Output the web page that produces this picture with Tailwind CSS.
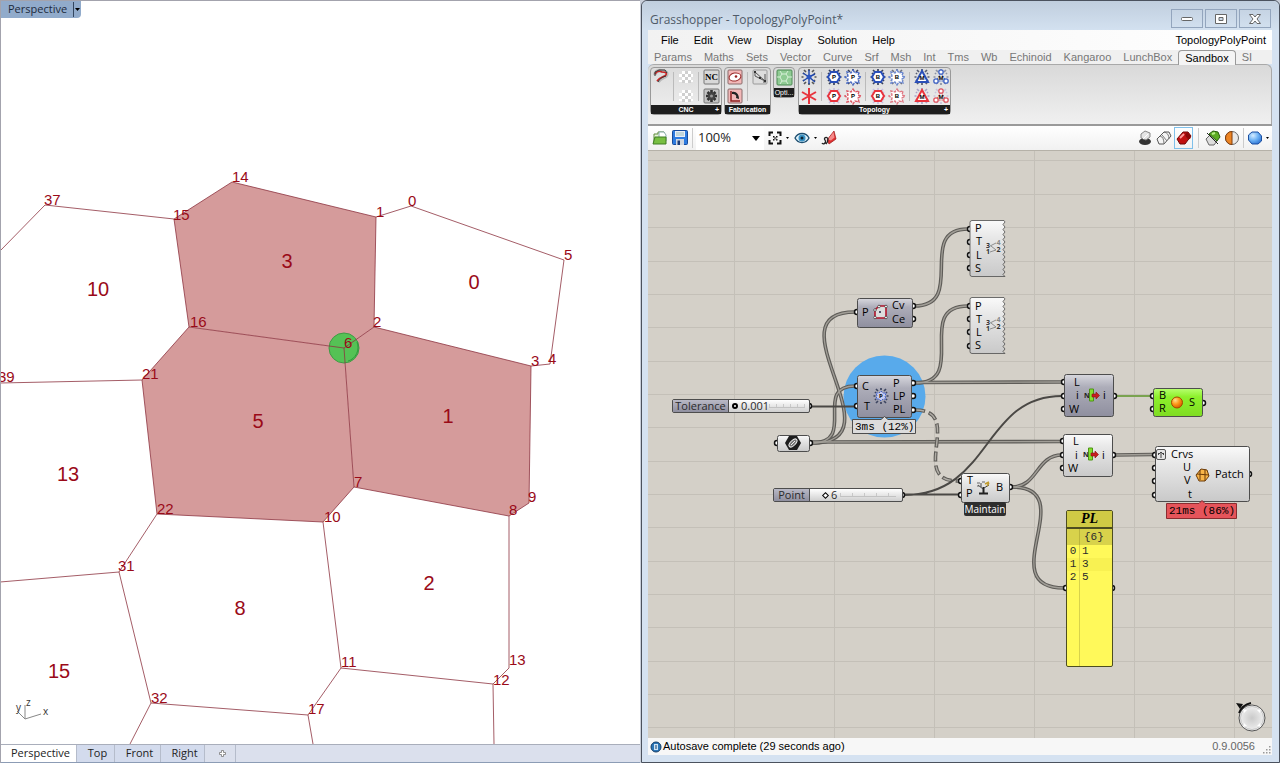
<!DOCTYPE html>
<html lang="en">
<head>
<meta charset="utf-8">
<title>Grasshopper - TopologyPolyPoint</title>
<script src="https://cdn.jsdelivr.net/npm/@tailwindcss/browser@4"></script>
</head>
<body class="flex h-screen overflow-hidden bg-[#c9cfda] font-['Liberation_Sans',sans-serif] text-black">

<!-- Shared symbols -->
<svg class="absolute size-0" aria-hidden="true">
  <defs>
    <linearGradient id="light" x1="0" y1="0" x2="0" y2="1"><stop offset="0" stop-color="#fafafa"/><stop offset=".3" stop-color="#e8e8e8"/><stop offset="1" stop-color="#c9c9c9"/></linearGradient>
    <linearGradient id="dim" x1="0" y1="0" x2="0" y2="1"><stop offset="0" stop-color="#d8d8de"/><stop offset=".3" stop-color="#adadb9"/><stop offset="1" stop-color="#8f8f9f"/></linearGradient>
    <linearGradient id="picked" x1="0" y1="0" x2="0" y2="1"><stop offset="0" stop-color="#b8ff70"/><stop offset=".3" stop-color="#8df02c"/><stop offset="1" stop-color="#7fdc22"/></linearGradient>
    <radialGradient id="orb" cx=".35" cy=".3" r=".7"><stop offset="0" stop-color="#ffe08a"/><stop offset=".5" stop-color="#ff9a1c"/><stop offset="1" stop-color="#d95f00"/></radialGradient>
    <radialGradient id="blueorb" cx=".35" cy=".3" r=".8"><stop offset="0" stop-color="#d5ecff"/><stop offset=".5" stop-color="#6db2f5"/><stop offset="1" stop-color="#2a6fd0"/></radialGradient>
    <radialGradient id="dial"><stop offset="0" stop-color="#cacaca"/><stop offset="1" stop-color="#ececec"/></radialGradient>
    <symbol id="specks" viewBox="0 0 18 18"><path d="M4 2l2 2M9 1v2M14 2l-2 2M1.500 9h2M14.500 9h2M3 5l1 1M15 5l-1 1M3 13l1-1M15 13l-1-1M4 16l2-2M9 15v2M14 16l-2-2" stroke="currentColor" stroke-width="1.700" fill="none"/></symbol>
    <symbol id="hex" viewBox="0 0 18 18"><path d="M6 4h6l3 5-3 5H6L3 9z" fill="#fff" stroke="currentColor" stroke-width="2"/></symbol>
    <symbol id="flower" viewBox="0 0 18 18"><path d="M9 2l2 3 4-1-1 4 3 1-3 2 1 4-4-1-2 3-2-3-4 1 1-4-3-2 3-1-1-4 4 1z" fill="#fff" stroke="currentColor" stroke-width="1.400" stroke-dasharray="3 1"/></symbol>
    <symbol id="tri" viewBox="0 0 18 18"><path d="M9 3l6 11H3z" fill="#fff" stroke="currentColor" stroke-width="2"/></symbol>
    <symbol id="tri3" viewBox="0 0 18 18"><path d="M9 5L4 13h10z" fill="none" stroke="currentColor" stroke-dasharray="2 1"/><g fill="#fff" stroke="currentColor" stroke-width="1.300"><circle cx="9" cy="4" r="2.200"/><circle cx="4" cy="13" r="2.200"/><circle cx="14" cy="13" r="2.200"/></g></symbol>
    <symbol id="checker" viewBox="0 0 18 18"><g fill="#fff"><path d="M5 3h3v3H5zM11 3h3v3h-3zM2 6h3v3H2zM8 6h3v3H8zM14 6h2v3h-2zM5 9h3v3H5zM11 9h3v3h-3zM2 12h3v2H2zM8 12h3v3H8zM14 12h2v2h-2z"/></g><g fill="#cfcfcf"><path d="M8 3h3v3H8zM5 6h3v3H5zM11 6h3v3h-3zM8 9h3v3H8zM5 12h3v3H5zM11 12h3v3h-3z"/></g></symbol>
    <symbol id="item" viewBox="0 0 16 14"><text x="0" y="10" font-size="7" font-weight="bold" fill="#222">N</text><path d="M5.500 1h4v12h-4z" fill="#84e02e" stroke="#4d9415"/><path d="M8 6h4V4l3.500 3.500-3.500 3.500V9H8z" fill="#c81e1e" stroke="#8a1010" stroke-width=".6"/></symbol>
    <symbol id="split" viewBox="0 0 16 16"><g font-size="7" fill="#333" font-weight="bold"><text x="0" y="8">3</text><text x="10.500" y="5" fill="#888">4</text><text x="0" y="14">1</text><text x="10.500" y="12">2</text></g><path d="M4 6l6-3M5 6l5 4M4 12l6-2" stroke="#777" stroke-width=".8"/></symbol>
  </defs>
</svg>

<!-- Rhino viewport -->
<section class="flex w-1/2 shrink-0 flex-col border-t border-l border-[#a3a3ad] bg-white font-['Open_Sans',sans-serif]" aria-label="Rhino viewport">
  <div class="relative min-h-0 flex-1 overflow-hidden">
    <svg class="size-full" aria-label="Cell topology">
      <g transform="translate(-1 -1)">
        <g fill="#d59b9b">
          <path d="M174 219L232 182 376 217 374 327 344 348 189 327z"/>
          <path d="M189 327L344 348 354 487 323 522 157 514 142 380z"/>
          <path d="M374 327L531 366 529 503 509 516 354 487 344 348z"/>
        </g>
        <circle cx="344" cy="348" r="15" fill="#55c255" stroke="#3f9a45"/>
        <path d="M357 342a13 14 0 0 1-9 19" fill="none" stroke="#2f9a3c"/>
        <path d="M0 251L45 205 174 219 232 182 376 217 411 206 564 260 550 364 531 366 374 327 376 217M174 219L189 327 344 348 374 327M189 327L142 380 0 383M142 380L157 514 323 522 354 487 344 348M354 487L509 516 529 503 531 366M157 514L119 572 0 582M119 572L151 703 308 715 341 668 323 522M151 703L130 744M308 715L313 744M341 668L493 684 509 668V516M493 684L494 744" fill="none" stroke="#8d3340" stroke-width=".8"/>
        <g fill="#9a0a18" class="font-['Liberation_Sans',sans-serif] text-[15px]">
          <text x="44" y="205">37</text><text x="232" y="182">14</text><text x="173" y="220">15</text><text x="376" y="217">1</text><text x="408" y="206">0</text><text x="564" y="260">5</text><text x="373" y="327">2</text><text x="190" y="327">16</text><text x="344" y="348">6</text><text x="531" y="366">3</text><text x="548" y="364">4</text><text x="142" y="379">21</text><text x="-2" y="382">39</text><text x="354" y="487">7</text><text x="528" y="502">9</text><text x="509" y="515">8</text><text x="157" y="514">22</text><text x="324" y="522">10</text><text x="118" y="571">31</text><text x="341" y="667">11</text><text x="509" y="665">13</text><text x="493" y="685">12</text><text x="151" y="703">32</text><text x="308" y="714">17</text>
        </g>
        <g fill="#9a0a18" class="font-['Liberation_Sans',sans-serif] text-[20px]" text-anchor="middle">
          <text x="98" y="296">10</text><text x="287" y="268">3</text><text x="474" y="289">0</text><text x="258" y="428">5</text><text x="448" y="423">1</text><text x="68" y="481">13</text><text x="429" y="590">2</text><text x="240" y="615">8</text><text x="59" y="678">15</text>
        </g>
        <path d="M17 711l8 8V705M25 719l16-5" fill="none" stroke="#888"/>
        <g fill="#333" class="text-[10px]"><text x="26" y="706">z</text><text x="16" y="711">y</text><text x="43" y="715">x</text></g>
      </g>
    </svg>
    <button class="absolute top-0 left-0 flex h-[17px] items-center rounded-br-sm bg-[#91abcb] pr-px pl-[7px] text-[11px] text-[#1c2a3c]">Perspective<span class="ml-1.5 h-[15px] w-px bg-[#33465f]"></span><svg class="ml-px h-1 w-[5px]" viewBox="0 0 5 4"><path d="M0 0h5L2.500 3z"/></svg></button>
  </div>
  <nav class="flex h-[19px] border-t border-b border-t-[#a9aebb] border-b-[#8c9cb5] bg-[#dbe0ed] text-[11px] text-[#222]" aria-label="Viewports">
    <button class="w-[76px] border-r border-[#b5bccb] bg-white pl-1">Perspective</button>
    <button class="w-[38px] border-r border-[#b5bccb] bg-[#d3dbed] pl-1">Top</button>
    <button class="w-[46px] border-r border-[#b5bccb] bg-[#d3dbed] pl-1">Front</button>
    <button class="w-11 border-r border-[#b5bccb] bg-[#d3dbed] pl-1">Right</button>
    <button class="flex w-[31px] items-center justify-center border-r border-[#b5bccb] pl-1" aria-label="Add viewport"><svg class="size-[7px]" viewBox="0 0 7 7"><path d="M2.500.5h2v2h2v2h-2v2h-2v-2h-2v-2h2z" fill="#fff" stroke="#777" stroke-width=".8"/></svg></button>
  </nav>
</section>

<!-- Grasshopper window -->
<main class="ml-px flex min-w-0 flex-1 flex-col rounded-t-md border border-[#4b525e] bg-[#d5e2f1] pr-[7px] pb-[7px] pl-1.5">
  <header class="-mr-[7px] -ml-1.5 flex h-[29px] shrink-0 justify-between rounded-t-md bg-linear-to-b from-[#c0cede] to-[#d3e1f0] pr-2 pl-2">
    <h1 class="pt-[11px] font-['Open_Sans',sans-serif] text-[12px] leading-4 text-[#4f5a68]">Grasshopper - TopologyPolyPoint*</h1>
    <div class="flex gap-0.5 pt-2">
      <button class="flex h-[19px] w-8 items-center justify-center border border-[#93a5bd]" aria-label="Minimize"><svg class="h-1 w-3" viewBox="0 0 12 4"><rect x=".5" y=".5" width="11" height="3" rx="1" fill="#fff" stroke="#666"/></svg></button>
      <button class="flex h-[19px] w-8 items-center justify-center border border-[#93a5bd]" aria-label="Maximize"><svg class="h-2.5 w-3" viewBox="0 0 12 10"><path d="M.5.500h11v9H.500zM4 3.500h4v3H4z" fill="#fff" fill-rule="evenodd" stroke="#666"/></svg></button>
      <button class="flex h-[19px] w-8 items-center justify-center border border-[#93a5bd]" aria-label="Close"><svg class="h-2.5 w-3" viewBox="0 0 12 10"><path d="M.5.500h3.500L6 3 8 .500h3.500L8 5l3.500 4.500H8L6 7 4 9.500H.500L4 5z" fill="#fff" stroke="#666"/></svg></button>
    </div>
  </header>

  <nav class="flex h-5 shrink-0 items-center bg-linear-to-r from-[#f2f2f2] to-white pr-1.5 pl-[13px] text-[11px]" aria-label="Menu">
    <div class="flex flex-1 gap-[15px]"><button>File</button><button>Edit</button><button>View</button><button>Display</button><button>Solution</button><button>Help</button></div>
    <button>TopologyPolyPoint</button>
  </nav>

  <nav class="flex h-3.5 shrink-0 bg-[#f0f0f0] text-[11px] leading-[15px] text-[#777]" aria-label="Component tabs">
    <button class="px-1.5">Params</button><button class="px-1.5">Maths</button><button class="px-1.5">Sets</button><button class="px-1.5">Vector</button><button class="px-1.5">Curve</button><button class="px-1.5">Srf</button><button class="px-1.5">Msh</button><button class="px-1.5">Int</button><button class="px-1.5">Tms</button><button class="px-1.5">Wb</button><button class="px-1.5">Echinoid</button><button class="px-1.5">Kangaroo</button><button class="px-1.5">LunchBox</button><button class="z-10 h-[15px] rounded-t-[4px] border border-b-0 border-[#999] bg-[#f4f4f4] px-1.5 leading-[13px] text-black">Sandbox</button><button class="px-1.5">SI</button>
  </nav>

  <!-- Ribbon -->
  <div class="flex h-[60px] shrink-0 items-start gap-0.5 rounded-t-md border-t border-r border-[#a9a9a9] bg-linear-to-b from-[#d9d9d9] to-[#f0f0f0] pt-0.5 pl-0.5">
    <section class="rounded-sm border border-[#999] bg-linear-to-b from-[#dcdcdc] to-[#efefef]">
      <div class="flex h-[37px] gap-[3px] px-px">
        <button class="size-[18px]" aria-label="Toolpath"><svg viewBox="0 0 18 18"><path d="M3 7c0-4 4-5 7-4 4 0 6 2 4 5-2 2-6 2-8 6" fill="none" stroke="#b8b8b8" stroke-width="3.500"/><path d="M3 6c2-3 5-3 7-2 4 0 5 1 4 3-2 2-6 2-9 6" fill="none" stroke="#c22" stroke-width="1.600"/><path d="M3 8V4l4-2h6l2 3M14 8c-3 1-6 2-8 6" fill="none" stroke="#333"/></svg></button>
        <span class="my-1 w-px bg-[#bbb]"></span>
        <div class="flex flex-col gap-px"><button class="size-[18px]" aria-label="Component"><svg viewBox="0 0 18 18"><use href="#checker"/></svg></button><button class="size-[18px]" aria-label="Component"><svg viewBox="0 0 18 18"><use href="#checker"/></svg></button></div>
        <span class="my-1 w-px bg-[#bbb]"></span>
        <div class="flex flex-col gap-px"><button class="size-[18px]" aria-label="NC"><svg viewBox="0 0 18 18"><rect x="2" y="2" width="15" height="14" rx="1" fill="#d8d8d8" stroke="#777"/><text x="9.500" y="12" font-family="Liberation Serif" font-size="9" font-weight="bold" text-anchor="middle">NC</text></svg></button><button class="size-[18px]" aria-label="Machine"><svg viewBox="0 0 18 18"><rect x="2" y="2" width="15" height="14" rx="1" fill="#c4c4c4" stroke="#777"/><path d="M9.500 3v12M4 9h11M5.500 5l8 8M13.500 5l-8 8" stroke="#333" stroke-width="2.600"/><circle cx="9.500" cy="9" r="3.500" fill="#444"/><circle cx="9.500" cy="9" r="1.500" fill="#999"/></svg></button></div>
      </div>
      <h2 class="relative h-[9px] bg-[#1e1e1e] text-center text-[7px] leading-[9px] font-bold text-white">CNC<span class="absolute right-0.5">+</span></h2>
    </section>
    <section class="rounded-sm border border-[#999] bg-linear-to-b from-[#dcdcdc] to-[#efefef]">
      <div class="flex h-[37px] gap-[3px] px-px">
        <div class="flex flex-col gap-px"><button class="size-[18px]" aria-label="Flatten"><svg viewBox="0 0 18 18"><rect x="2" y="2" width="14" height="14" rx="1" fill="#f3b9b9" stroke="#8a6a6a"/><ellipse cx="9" cy="9" rx="6" ry="4" transform="rotate(-12 9 9)" fill="#fff" stroke="#9a2a2a"/><circle cx="10" cy="8.500" r="1.300" fill="#922"/></svg></button><button class="size-[18px]" aria-label="Orient"><svg viewBox="0 0 18 18"><rect x="2" y="2" width="14" height="14" rx="1" fill="#f3b9b9" stroke="#8a6a6a"/><path d="M5 4v10h9" fill="none" stroke="#8d2020" stroke-width="1.500"/><path d="M6 5c4-1 7 2 7 7l-3-1c1-3-1-4-4-4z" fill="#222"/></svg></button></div>
        <span class="my-1 w-px bg-[#bbb]"></span>
        <button class="size-[18px]" aria-label="Dimension"><svg viewBox="0 0 18 18"><rect x="2" y="2" width="14" height="14" rx="1" fill="#ddd" stroke="#999"/><path d="M4 3v5l10 5V6M4 4l10 9M12 14h3" fill="none" stroke="#444" stroke-width=".9"/><path d="M3 3h2v2H3zM8 9h2v2H8zM13 12h2v2h-2z" fill="#333"/></svg></button>
      </div>
      <h2 class="h-[9px] bg-[#1e1e1e] text-center text-[7px] leading-[9px] font-bold text-white">Fabrication</h2>
    </section>
    <section class="mr-px rounded-sm border border-[#999] bg-[#dcdcdc]">
      <button class="block size-5" aria-label="Optimize"><svg viewBox="0 0 20 20"><rect x="3" y="2" width="15" height="15" rx="1" fill="#8fcb93" stroke="#4c8a55"/><path d="M6 3l2 3-2 3 2 4-2 3M8 6h4l2 3-2 4H8M12 6l2-3M14 9h4M12 13l2 3M3 9h3" fill="none" stroke="#d7f0d8"/></svg></button>
      <h2 class="h-[9px] bg-[#1e1e1e] text-center text-[7px] leading-[9px] text-white">Opti...</h2>
    </section>
    <section class="rounded-sm border border-[#999] bg-linear-to-b from-[#dcdcdc] to-[#efefef]">
      <div class="flex h-[37px] gap-[3px] pl-px">
        <div class="flex flex-col gap-px"><button class="size-[18px]" aria-label="Line topology"><svg viewBox="0 0 18 18"><g color="#555"><use href="#specks"/></g><path d="M9 9L9 2M9 9l6-3M9 9l6 5M9 9v7M9 9l-6 4M9 9L3 5" stroke="#1f45a8" stroke-width="1.400"/><circle cx="9" cy="9" r="2.500" fill="#2b55c0"/></svg></button><button class="size-[18px]" aria-label="Line split"><svg viewBox="0 0 18 18"><path d="M9 1v16M2 5l14 8M2 13l14-8" stroke="#e8343d" stroke-width="2"/></svg></button></div>
        <span class="my-1 w-px bg-[#bbb]"></span>
        <div class="grid grid-cols-2 gap-px">
          <button class="size-[18px]" aria-label="Polyline topology"><svg viewBox="0 0 18 18"><g color="#39415c"><use href="#specks"/></g><g color="#2a4fb8"><use href="#hex"/></g><text x="9" y="11" font-size="6" font-weight="bold" text-anchor="middle">P</text></svg></button>
          <button class="size-[18px]" aria-label="Polyline point topology"><svg viewBox="0 0 18 18"><g color="#39415c"><use href="#specks"/></g><g color="#4b6cc4"><use href="#flower"/></g><text x="9" y="11" font-size="6" font-weight="bold" text-anchor="middle">P</text></svg></button>
          <button class="size-[18px]" aria-label="Polyline edge"><svg viewBox="0 0 18 18"><g color="#c9bfe0"><use href="#specks"/></g><g color="#e8343d"><use href="#hex"/></g><text x="9" y="11" font-size="6" font-weight="bold" text-anchor="middle">P</text></svg></button>
          <button class="size-[18px]" aria-label="Polyline face"><svg viewBox="0 0 18 18"><g color="#dd5a66"><use href="#flower"/></g><text x="9" y="11" font-size="6" font-weight="bold" text-anchor="middle">P</text></svg></button>
        </div>
        <span class="my-1 w-px bg-[#bbb]"></span>
        <div class="grid grid-cols-2 gap-px">
          <button class="size-[18px]" aria-label="Brep topology"><svg viewBox="0 0 18 18"><g color="#39415c"><use href="#specks"/></g><g color="#2a4fb8"><use href="#hex"/></g><text x="9" y="11" font-size="6" font-weight="bold" text-anchor="middle">B</text></svg></button>
          <button class="size-[18px]" aria-label="Brep point topology"><svg viewBox="0 0 18 18"><g color="#6a7080"><use href="#specks"/></g><g color="#6b88d0"><use href="#flower"/></g><text x="9" y="11" font-size="6" font-weight="bold" text-anchor="middle">B</text></svg></button>
          <button class="size-[18px]" aria-label="Brep edge"><svg viewBox="0 0 18 18"><g color="#c9bfe0"><use href="#specks"/></g><g color="#e8343d"><use href="#hex"/></g><text x="9" y="11" font-size="6" font-weight="bold" text-anchor="middle">B</text></svg></button>
          <button class="size-[18px]" aria-label="Brep face"><svg viewBox="0 0 18 18"><g color="#e07a85"><use href="#flower"/></g><text x="9" y="11" font-size="6" font-weight="bold" text-anchor="middle">B</text></svg></button>
        </div>
        <span class="my-1 w-px bg-[#bbb]"></span>
        <div class="grid grid-cols-2 gap-px">
          <button class="size-[18px]" aria-label="Mesh topology"><svg viewBox="0 0 18 18"><g color="#555c72"><use href="#specks"/></g><g color="#2a4fb8"><use href="#tri"/></g><text x="9" y="12" font-size="6" font-weight="bold" text-anchor="middle">M</text></svg></button>
          <button class="size-[18px]" aria-label="Mesh point topology"><svg viewBox="0 0 18 18"><g color="#8b92a5"><use href="#specks"/></g><g color="#3f63c4"><use href="#tri3"/></g><text x="9" y="12" font-size="6" font-weight="bold" text-anchor="middle">M</text></svg></button>
          <button class="size-[18px]" aria-label="Mesh edge"><svg viewBox="0 0 18 18"><g color="#a9a3c8"><use href="#specks"/></g><g color="#e8343d"><use href="#tri"/></g><text x="9" y="12" font-size="6" font-weight="bold" text-anchor="middle">M</text></svg></button>
          <button class="size-[18px]" aria-label="Mesh face"><svg viewBox="0 0 18 18"><g color="#c9c4dc"><use href="#specks"/></g><g color="#e05560"><use href="#tri3"/></g><text x="9" y="12" font-size="6" font-weight="bold" text-anchor="middle">M</text></svg></button>
        </div>
      </div>
      <h2 class="relative h-[9px] bg-[#1e1e1e] text-center text-[7px] leading-[9px] font-bold text-white">Topology<span class="absolute right-0.5">+</span></h2>
    </section>
  </div>

  <!-- Canvas toolbar -->
  <div class="flex h-[26px] shrink-0 items-center border-t-2 border-[#9a9a9a] bg-linear-to-b from-white to-[#f1f1f1] pr-[3px]">
    <button class="ml-1 size-4" aria-label="Open"><svg viewBox="0 0 16 16"><path d="M2 14V4h4V2h6v4" fill="#eaf5dc" stroke="#5d8a3a"/><path d="M7 2h5l2 3v6H7z" fill="#fff" stroke="#8aa"/><path d="M1 14l2-7h11v7z" fill="#78bf42" stroke="#3f7d23"/></svg></button>
    <button class="ml-1 size-4" aria-label="Save"><svg viewBox="0 0 16 16"><rect x=".5" y=".5" width="15" height="14" rx="1" fill="#2d7be0" stroke="#174a9a"/><path d="M3 1h10v6H3z" fill="#e8eef8"/><path d="M4 9h8v6H4z" fill="#cfd6e0"/><path d="M5.500 10.500h2.500V15H5.500z" fill="#1c3c78"/><path d="M4 3h8M4 5h8" stroke="#9bb"/></svg></button>
    <span class="ml-1 h-5 w-px bg-[#ccc]"></span>
    <div class="relative ml-[3px] flex h-6 w-[68px] items-center bg-white">
      <select class="h-full w-full appearance-none bg-transparent pl-0.5 font-['Open_Sans',sans-serif] text-[13px] text-[#222]" aria-label="Zoom"><option>100%</option></select>
      <svg class="pointer-events-none absolute right-1 h-[5px] w-2" viewBox="0 0 8 5"><path d="M0 0h8L4 5z"/></svg>
    </div>
    <button class="ml-1 flex items-center gap-1" aria-label="Zoom extents"><svg class="size-3.5" viewBox="0 0 14 14"><path d="M1.500 5V1.500H5M9 1.500h3.500V5M12.500 9v3.500H9M5 12.500H1.500V9" fill="none" stroke="#111" stroke-width="2"/><path d="M5 5h1.500v1.500H5zM8 5h1.500v1.500H8zM5 8h1.500v1.500H5zM8 8h1.500v1.500H8z" fill="#111"/><path d="M6 6h2.500v2.500H6z" fill="#777"/></svg><svg class="h-0.5 w-[3px]" viewBox="0 0 3 2"><path d="M0 0h3L1.500 2z"/></svg></button>
    <button class="ml-[5px] flex items-center gap-1" aria-label="Named views"><svg class="h-3 w-4" viewBox="0 0 16 12"><path d="M1 6c3-6 11-6 14 0-3 6-11 6-14 0z" fill="#dff1fa" stroke="#1d4e70" stroke-width="1.300"/><circle cx="8" cy="6" r="3.500" fill="#3a93c5"/><circle cx="8" cy="6" r="1.500" fill="#0b2436"/></svg><svg class="h-0.5 w-[3px]" viewBox="0 0 3 2"><path d="M0 0h3L1.500 2z"/></svg></button>
    <button class="ml-1 size-4" aria-label="Sketch"><svg viewBox="0 0 16 16"><path d="M13 1l2 8-7 5-2-4z" fill="#e03030" stroke="#9a1717" stroke-width=".7"/><path d="M12.500 2L7 9.500l3 1 3.500-3z" fill="#f58a8a"/><path d="M1 13c1 2 5 0 3-3-2-2 2-4 3-1 0 3-1 4-2 5" fill="none" stroke="#222" stroke-width="1.300"/></svg></button>
    <span class="flex-1"></span>
    <button class="size-4" aria-label="Preview off"><svg viewBox="0 0 16 16"><ellipse cx="8" cy="11.500" rx="6" ry="3.500" fill="#333"/><path d="M4 4l4-3 5 2v4L9 10 4 8z" fill="#e4e4e4" stroke="#888"/><path d="M6 9l5-5" stroke="#fff"/></svg></button>
    <button class="ml-[3px] size-4" aria-label="Wireframe preview"><svg viewBox="0 0 16 16"><path d="M1 9l7-7 5 0 2 4-7 8-5 0z" fill="#f4f4f4" stroke="#555"/><path d="M4 6q4 1 4 8M8 2q5 1 5 7M6 5l5 6" fill="none" stroke="#777"/></svg></button>
    <button class="ml-0.5 flex h-[22px] w-[19px] items-center justify-center border border-[#7fc0ea]" aria-label="Shaded preview"><svg class="size-4" viewBox="0 0 16 16"><path d="M1 9l6-7h5l3 4-6 8H4z" fill="#c01010" stroke="#6d0808"/><path d="M4 8l4-4" stroke="#ff9a9a" stroke-width="2"/><ellipse cx="12" cy="6" rx="2" ry="3.500" transform="rotate(-35 12 6)" fill="#8a0808"/></svg></button>
    <span class="mx-[5px] h-5 w-px bg-[#ccc]"></span>
    <button class="ml-px size-4" aria-label="Selected preview"><svg viewBox="0 0 16 16"><path d="M1 9l5-5 6 7-3 4H4z" fill="#ddd" stroke="#666"/><path d="M4 4l4-3 5 1 2 5-3 4z" fill="#5bab22" stroke="#255c0c"/><path d="M7 4l3-1" stroke="#b6ee85" stroke-width="2"/><path d="M2 3l11 11" stroke="#222"/></svg></button>
    <button class="ml-[3px] size-4" aria-label="Document preview"><svg viewBox="0 0 16 16"><circle cx="8" cy="8" r="6.500" fill="#e9e9e9" stroke="#666"/><path d="M8 1.500a6.500 6.500 0 0 0 0 13z" fill="#ed8524" stroke="#803c0c"/></svg></button>
    <span class="mx-[3px] h-5 w-px bg-[#ccc]"></span>
    <button class="ml-px flex items-center gap-1" aria-label="Preview quality"><svg class="size-3.5" viewBox="0 0 14 14"><path d="M4 1h6l3.500 4v5L10 13H4L.500 9V4z" fill="url(#blueorb)" stroke="#1d4fa0"/></svg><svg class="h-0.5 w-[3px]" viewBox="0 0 3 2"><path d="M0 0h3L1.500 2z"/></svg></button>
  </div>

  <!-- Node canvas -->
  <div class="relative min-h-0 flex-1 overflow-hidden bg-[#d4d0c8] font-['Open_Sans',sans-serif] text-[11px] text-[#2b2b2b]">
    <svg class="size-full" aria-label="Definition canvas">
      <g transform="translate(-648 -150)">
        <path d="M734.500 150V740M834.500 150V740M934.500 150V740M1034.500 150V740M1134.500 150V740M1234.500 150V740M648 160.500H1280M648 194.500H1280M648 227.500H1280M648 261.500H1280M648 294.500H1280M648 327.500H1280M648 361.500H1280M648 394.500H1280M648 427.500H1280M648 461.500H1280M648 494.500H1280M648 527.500H1280M648 561.500H1280M648 594.500H1280M648 627.500H1280M648 661.500H1280M648 694.500H1280M648 727.500H1280" stroke="#c4c0b8" fill="none"/>
        <path d="M648 150.500H1272" stroke="#b5b1a8"/>
        <circle cx="884.500" cy="396.500" r="41" fill="#58aaeb"/>

        <!-- Wires -->
        <g fill="none">
          <g stroke="#5e5c58" stroke-width="3.600">
            <path id="w1" d="M914 306C968 306 915 229 968 229"/>
            <path id="w2" d="M812 443C902 443 768 312 855 312"/>
            <path id="w3" d="M812 443C858 443 812 386 855 386"/>
            <path id="w4" d="M812 442L1062 441.500"/>
            <path id="w5" d="M915 383C970 383 913 306 968 306"/>
            <path id="w6" d="M915 382.500L1062 382"/>
            <path id="w7" d="M1012 487C1038 487 1036 455 1062 455"/>
            <path id="w8" d="M1012 487C1083 487 991 588 1064 588"/>
            <path id="w9" d="M1115 455L1152 454.500"/>
          </g>
          <g stroke="#a19e97" stroke-width="1.300"><use href="#w1"/><use href="#w2"/><use href="#w3"/><use href="#w4"/><use href="#w5"/><use href="#w6"/><use href="#w7"/><use href="#w8"/><use href="#w9"/></g>
          <path d="M915 410C966 410 907 481 958 481" stroke="#5e5c58" stroke-width="3.600" stroke-dasharray="10 4"/>
          <path d="M915 410C966 410 907 481 958 481" stroke="#b0ada6" stroke-width="1.400" stroke-dasharray="8 6" stroke-dashoffset="-1"/>
          <path d="M811 406.500H855M904 494.500H958M904 495C992 495 982 396 1062 396" stroke="#4a4845" stroke-width="2"/>
          <path d="M1116 396H1151" stroke="#7aa350" stroke-width="2"/>
        </g>

        <!-- Grips -->
        <g fill="#fff" stroke="#111" stroke-width="1.500">
          <circle cx="857" cy="312" r="2.500"/><circle cx="913" cy="306" r="2.500"/><circle cx="913" cy="319" r="2.500"/>
          <circle cx="857" cy="386" r="2.500"/><circle cx="857" cy="406" r="2.500"/><circle cx="913" cy="383" r="2.500"/><circle cx="913" cy="396" r="2.500"/><circle cx="913" cy="410" r="2.500"/>
          <circle cx="777" cy="443" r="2.500"/><circle cx="810" cy="443" r="2.500"/><circle cx="809" cy="406" r="2.500"/><circle cx="902" cy="495" r="2.500"/>
          <circle cx="970" cy="229" r="2.500"/><circle cx="970" cy="242" r="2.500"/><circle cx="970" cy="255" r="2.500"/><circle cx="970" cy="268" r="2.500"/>
          <circle cx="970" cy="306" r="2.500"/><circle cx="970" cy="319" r="2.500"/><circle cx="970" cy="332" r="2.500"/><circle cx="970" cy="346" r="2.500"/>
          <circle cx="1064" cy="382" r="2.500"/><circle cx="1064" cy="396" r="2.500"/><circle cx="1064" cy="409" r="2.500"/><circle cx="1114" cy="396" r="2.500"/>
          <circle cx="1063" cy="441" r="2.500"/><circle cx="1063" cy="455" r="2.500"/><circle cx="1063" cy="468" r="2.500"/><circle cx="1113" cy="455" r="2.500"/>
          <circle cx="1153" cy="396" r="2.500"/><circle cx="1153" cy="409" r="2.500"/><circle cx="1203" cy="403" r="2.500"/>
          <circle cx="1155" cy="455" r="2.500"/><circle cx="1155" cy="468" r="2.500"/><circle cx="1155" cy="481" r="2.500"/><circle cx="1155" cy="495" r="2.500"/><circle cx="1249" cy="474" r="2.500"/>
          <circle cx="961" cy="481" r="2.500"/><circle cx="961" cy="495" r="2.500"/><circle cx="1010" cy="487" r="2.500"/>
          <circle cx="1066" cy="588" r="2.500"/><circle cx="1112" cy="588" r="2.500"/>
        </g>

        <!-- Component bodies -->
        <g stroke="#4d4d4d">
          <rect x="857.500" y="298.500" width="55" height="29" rx="2" fill="url(#dim)"/>
          <rect x="857.500" y="375.500" width="54" height="42" rx="2" fill="url(#dim)"/>
          <rect x="1064.500" y="374.500" width="49" height="42" rx="2" fill="url(#dim)"/>
          <rect x="777.500" y="435.500" width="32" height="16" rx="2" fill="url(#light)"/>
          <rect x="1063.500" y="434.500" width="49" height="42" rx="2" fill="url(#light)"/>
          <rect x="1155.500" y="446.500" width="94" height="55" rx="2" fill="url(#light)"/>
          <rect x="961.500" y="473.500" width="48" height="29" rx="2" fill="url(#light)"/>
          <rect x="1153.500" y="388.500" width="49" height="28" rx="2" fill="url(#picked)"/>
          <path id="torn" d="M1004 220.500H972q-2 0-2 2V274.500q0 2 2 2H1005l-2-2 2-2.500-2-2.500 2-2.500-2-2.500 2-2.500-2-2.500 2-2.500-2-2.500 2-2.500-2-2.500 2-2.500-2-2.500 2-2.500-2-2.500 2-2.500-2-2.500 2-2.500-2-2.500 2-2.500-2-2.500 2-2.500z" fill="url(#light)" stroke-width=".8"/>
          <use href="#torn" y="77"/>
        </g>

        <!-- Port labels -->
        <g>
          <text x="975" y="232">P</text><text x="976" y="245">T</text><text x="976" y="259">L</text><text x="975" y="272">S</text>
          <text x="975" y="310">P</text><text x="976" y="323">T</text><text x="976" y="336">L</text><text x="975" y="349">S</text>
          <text x="862" y="316">P</text><text x="892" y="309">Cv</text><text x="892" y="323">Ce</text>
          <text x="862" y="390">C</text><text x="864" y="410">T</text><text x="893" y="387">P</text><text x="893" y="400">LP</text><text x="893" y="413">PL</text>
          <text x="1074" y="386">L</text><text x="1076" y="399">i</text><text x="1069" y="413">W</text><text x="1103" y="399">i</text>
          <text x="1073" y="445">L</text><text x="1075" y="459">i</text><text x="1068" y="472">W</text><text x="1102" y="459">i</text>
          <text x="1159" y="399">B</text><text x="1159" y="412">R</text><text x="1189" y="406">S</text>
          <text x="1171" y="458">Crvs</text><text x="1183" y="471">U</text><text x="1184" y="484">V</text><text x="1188" y="498">t</text><text x="1215" y="478">Patch</text>
          <text x="967" y="484">T</text><text x="966" y="497">P</text><text x="996" y="491">B</text>
        </g>

        <!-- Component icons -->
        <path d="M875 317V310l4-4h7v12H875z" fill="#ddd" stroke="#b3122a" stroke-width="1.600"/><g fill="#fff" stroke="#333" stroke-width=".7"><circle cx="875" cy="317.500" r="1.300"/><circle cx="875" cy="310" r="1.300"/><circle cx="879" cy="306.500" r="1.300"/><circle cx="886" cy="306.500" r="1.300"/><circle cx="886" cy="317.500" r="1.300"/></g><circle cx="880" cy="312" r="1" fill="#224"/>
        <svg x="872" y="387" width="18" height="18"><g color="#3d4560"><use href="#specks"/></g><path d="M9 4l2 2h3l-1 3 1 3h-3l-2 2-2-2H4l1-3-1-3h3z" fill="#c8cdf0" stroke="#4463c8" stroke-dasharray="2 1"/><text x="9" y="11" font-size="6" font-weight="bold" text-anchor="middle">P</text></svg>
        <path d="M785 443l4-7h8l4 7-4 7h-8z" fill="#1d1d1d"/><ellipse cx="793" cy="443" rx="5" ry="2.500" transform="rotate(-45 793 443)" fill="#777" stroke="#eee"/><path d="M791 445l4-4" stroke="#eee"/>
        <use href="#split" x="986" y="240" width="16" height="16"/><use href="#split" x="986" y="317" width="16" height="16"/>
        <use href="#item" x="1084" y="388" width="16" height="14"/><use href="#item" x="1083" y="447" width="16" height="14"/>
        <circle cx="1177" cy="402.500" r="5.500" fill="url(#orb)" stroke="#a34a00"/>
        <path d="M1196 475l5-6 6 1 2 6-4 5h-6z" fill="#f9b548" stroke="#6b3a08"/><path d="M1197 474l12 1M1200 470v10M1205 469v12" fill="none" stroke="#6b3a08"/>
        <rect x="1156.500" y="449.500" width="9" height="10" rx="1.500" fill="#e5e5e5" stroke="#555"/><path d="M1161 458v-6m-2 2l2-2 2 2m-4 1q-2-1 0-2m4 2q2-1 0-2" fill="none" stroke="#444"/>
        <path d="M979 493.500h9M983.500 493v-6" fill="none" stroke="#222" stroke-width="2"/><path d="M983 489l-5-4M984 488l5-3M981 487v-4" fill="none" stroke="#444"/><path d="M977 483h3M982 482h3M977 486h2" stroke="#666"/><path d="M985 484l4-2M987 486l2-3" stroke="#c09a2c" stroke-width="1.500"/>

        <!-- Profiler tags -->
        <path d="M852.500 419.500H881l3.500-3 3.500 3H915.500V433.500H852.500z" fill="#dcdcdc" stroke="#4d4d4d"/>
        <path d="M1166.500 503.500H1199l3-3 3 3H1236.500V518.500H1166.500z" fill="#e5545a" stroke="#8a2c30"/>
        <g class="font-['Liberation_Mono',monospace]"><text x="855" y="430">3ms (12%)</text><text x="1169" y="514">21ms (86%)</text></g>
        <rect x="964" y="502" width="42" height="14" rx="2" fill="#2e2e2e"/><text x="985" y="513" fill="#fff" text-anchor="middle" class="text-[10px]">Maintain</text>
      </g>
    </svg>

    <label class="absolute top-[249px] left-6 flex h-3.5 w-[138px] rounded-xs border border-[#4d4d4d] bg-linear-to-b from-white to-[#cfcfcf]">
      <span class="w-14 shrink-0 border-r border-[#4d4d4d] bg-linear-to-b from-[#b9b9c6] to-[#8f8f9f] text-center leading-3">Tolerance</span>
      <input type="range" min="0" max="1" step="0.001" value="0.001" class="w-full min-w-0 appearance-none bg-transparent px-[3px] [&::-webkit-slider-thumb]:size-1.5 [&::-webkit-slider-thumb]:appearance-none [&::-webkit-slider-thumb]:rounded-full [&::-webkit-slider-thumb]:border-2 [&::-webkit-slider-thumb]:border-black [&::-webkit-slider-thumb]:bg-white">
      <output class="pointer-events-none absolute left-[68px] leading-3">0.001</output>
      <span class="pointer-events-none absolute top-1 right-1 h-1 w-9 border-b border-[#c2c2c2] bg-[repeating-linear-gradient(90deg,#c8c8c8_0_1px,transparent_1px_7px)]"></span>
    </label>
    <label class="absolute top-[338px] left-[125px] flex h-3.5 w-[130px] rounded-xs border border-[#4d4d4d] bg-linear-to-b from-white to-[#cfcfcf]">
      <span class="w-9 shrink-0 border-r border-[#4d4d4d] bg-linear-to-b from-[#b9b9c6] to-[#8f8f9f] text-center leading-3">Point</span>
      <input type="range" min="0" max="50" value="6" class="w-full min-w-0 appearance-none bg-transparent px-[3px] [&::-webkit-slider-thumb]:size-[5px] [&::-webkit-slider-thumb]:rotate-45 [&::-webkit-slider-thumb]:appearance-none [&::-webkit-slider-thumb]:border [&::-webkit-slider-thumb]:border-black [&::-webkit-slider-thumb]:bg-white">
      <output class="pointer-events-none absolute left-[57px] leading-3">6</output>
      <span class="pointer-events-none absolute top-1 right-1.5 h-1 w-14 border-b border-[#c2c2c2] bg-[repeating-linear-gradient(90deg,#c8c8c8_0_1px,transparent_1px_12px)]"></span>
    </label>

    <table class="absolute top-[360px] left-[418px] h-[157px] w-[47px] table-fixed border-separate border-spacing-0 overflow-hidden rounded-xs border border-[#4d4d20] bg-[#fff95a] font-['Liberation_Mono',monospace] text-[11px] leading-[13px]" aria-label="Panel">
      <colgroup><col class="w-[13px]"><col></colgroup>
      <thead>
        <tr><th colspan="2" class="h-[18px] border-b-2 border-[#4d4d20] bg-[#cfca45] p-0 font-['Liberation_Serif',serif] text-[14px] leading-4 text-black italic">PL</th></tr>
        <tr><td class="h-4 border-r border-[#bbb53c] bg-[#d8d24b] p-0"></td><td class="bg-[#d8d24b] p-0 pl-1">{6}</td></tr>
      </thead>
      <tbody>
        <tr><td class="h-[13px] border-r border-[#d8d24b] p-0 text-center">0</td><td class="p-0 pl-0.5">1</td></tr>
        <tr><td class="h-[13px] border-r border-[#d8d24b] bg-[#f8f152] p-0 text-center">1</td><td class="bg-[#f8f152] p-0 pl-0.5">3</td></tr>
        <tr><td class="h-[13px] border-r border-[#d8d24b] p-0 text-center">2</td><td class="p-0 pl-0.5">5</td></tr>
        <tr><td class="border-r border-[#d8d24b] p-0"></td><td class="p-0"></td></tr>
      </tbody>
    </table>

    <button class="absolute right-1.5 bottom-1.5 h-8 w-[30px]" aria-label="Canvas compass"><svg viewBox="0 0 30 32"><circle cx="16" cy="18" r="13" fill="#f4f4f4" stroke="#555"/><circle cx="16" cy="18" r="11.500" fill="url(#dial)" stroke="#aaa" stroke-width=".6"/><path d="M7 9l4 1-3 3zM25 9l-1 4-3-3zM7 27l1-4 3 3zM25 27l-4-1 3-3z" fill="#fff"/><path d="M3 13q3-8 12-10" fill="none" stroke="#111" stroke-width="1.800"/><path d="M0 3l7 1-3 5z" fill="#111"/></svg></button>
  </div>

  <footer class="flex h-[17px] shrink-0 items-center bg-[#f7f7f7] pr-px pl-0.5 text-[11px]">
    <svg class="mr-px size-3" viewBox="0 0 12 12"><circle cx="6" cy="6" r="5" fill="#2a76b8" stroke="#123c66"/><path d="M4 3h4v6H4z" fill="#cfe4f5"/><path d="M6 4v4" stroke="#123c66"/></svg>
    <span class="flex-1">Autosave complete (29 seconds ago)</span>
    <span class="text-[#666]">0.9.0056</span>
    <svg class="mt-1.5 ml-2 size-2" viewBox="0 0 8 8"><path d="M6 0h1.500v1.500H6zM3 3h1.500v1.500H3zM6 3h1.500v1.500H6zM0 6h1.500v1.500H0zM3 6h1.500v1.500H3zM6 6h1.500v1.500H6z" fill="#999"/></svg>
  </footer>
</main>
</body>
</html>
